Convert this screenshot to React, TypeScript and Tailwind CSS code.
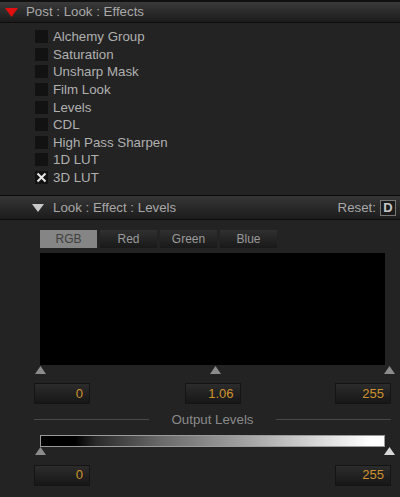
import React from 'react';

const effects = [
  'Alchemy Group',
  'Saturation',
  'Unsharp Mask',
  'Film Look',
  'Levels',
  'CDL',
  'High Pass Sharpen',
  '1D LUT',
  '3D LUT',
];

const Marker: React.FC<{ light?: boolean }> = ({ light }) => (
  <svg width="11" height="8" viewBox="0 0 11 8" className="block">
    <polygon points="5.5,0 11,8 0,8" fill={light ? '#d8d8d8' : '#8c8c8c'} />
  </svg>
);

const NumBox: React.FC<{ value: string }> = ({ value }) => (
  <div className="w-[56px] h-[21px] flex items-center justify-end pr-[6px] bg-gradient-to-b from-[#2c2c2c] to-[#171717] border border-[#141414] text-[13px] text-[#d0922c]">
    {value}
  </div>
);

const App: React.FC = () => {
  return (
    <div className="w-[400px] h-[497px] overflow-hidden bg-[#232323] font-['Liberation_Sans',Arial,sans-serif] flex flex-col">
      {/* top header */}
      <div className="h-[2px] bg-[#101010]" />
      <div className="h-[21px] flex items-center bg-gradient-to-b from-[#3a3a3a] to-[#1c1c1c] border-b border-[#0c0c0c]">
        <svg width="13" height="9" viewBox="0 0 13 9" className="ml-[5px]">
          <polygon points="0,0 13,0 6.5,9" fill="#e01010" />
        </svg>
        <span className="ml-[8px] text-[13.3px] text-[#a8a8a8]">Post : Look : Effects</span>
      </div>

      {/* effects list */}
      <div className="pt-[5px] pl-[35px] flex flex-col">
        {effects.map((name) => (
          <div key={name} className="h-[17.6px] flex items-center gap-[5px]">
            <div className="w-[13px] h-[13px] bg-[#121212] flex items-center justify-center">
              {name === '3D LUT' && (
                <svg width="11" height="11" viewBox="0 0 11 11">
                  <path d="M1.5 1.5 L9.5 9.5 M9.5 1.5 L1.5 9.5" stroke="#e8e8e8" strokeWidth="2" />
                </svg>
              )}
            </div>
            <span className="text-[13.3px] text-[#b0b0b0] leading-none">{name}</span>
          </div>
        ))}
      </div>

      {/* levels header */}
      <div className="mt-[9px] h-[25px] flex items-center border-y border-[#0c0c0c] bg-gradient-to-b from-[#363636] to-[#1c1c1c]">
        <svg width="12" height="8" viewBox="0 0 12 8" className="ml-[32px]">
          <polygon points="0,0 12,0 6,8" fill="#c8c8c8" />
        </svg>
        <span className="ml-[9px] text-[13.3px] text-[#a8a8a8]">Look : Effect : Levels</span>
        <span className="ml-auto text-[13.3px] text-[#a8a8a8]">Reset:</span>
        <div className="ml-[4px] mr-[4px] w-[16px] h-[16px] border border-[#777] bg-[#1a1a1a] flex items-center justify-center text-[13px] font-bold text-[#c8c8c8]">
          D
        </div>
      </div>

      {/* channel tabs */}
      <div className="mt-[10px] ml-[40px] flex gap-[3px]">
        <div className="w-[57px] h-[18px] flex items-center justify-center bg-[#858585] text-[12px] text-[#404040]">RGB</div>
        {['Red', 'Green', 'Blue'].map((t) => (
          <div
            key={t}
            className="w-[57px] h-[18px] flex items-center justify-center bg-gradient-to-b from-[#303030] to-[#191919] text-[12px] text-[#9a9a9a]"
          >
            {t}
          </div>
        ))}
      </div>

      {/* histogram */}
      <div className="mt-[5px] ml-[40px] w-[345px] h-[112px] bg-black" />
      <div className="mt-px w-[360px] ml-[35px] flex justify-between">
        <Marker />
        <Marker />
        <Marker />
      </div>

      {/* input values */}
      <div className="mt-[9px] ml-[34px] w-[357px] flex justify-between">
        <NumBox value="0" />
        <NumBox value="1.06" />
        <NumBox value="255" />
      </div>

      {/* output levels label */}
      <div className="mt-[9px] ml-[34px] w-[357px] flex items-center gap-[22px]">
        <div className="flex-1 h-px bg-[#484848]" />
        <span className="text-[13.3px] text-[#8a8a8a] leading-none">Output Levels</span>
        <div className="flex-1 h-px bg-[#484848]" />
      </div>

      {/* output gradient */}
      <div className="mt-[8px] ml-[40px] w-[345px] h-[12px] border border-[#9a9a9a] bg-[linear-gradient(to_right,#000_0%,#000_10%,#2a2a2a_16%,#6a6a6a_35%,#b0b0b0_65%,#fff_96%)]" />
      <div className="w-[360px] ml-[35px] flex justify-between">
        <Marker />
        <Marker light />
      </div>

      <div className="mt-[10px] ml-[34px] w-[357px] flex justify-between">
        <NumBox value="0" />
        <NumBox value="255" />
      </div>
    </div>
  );
};

export default App;
